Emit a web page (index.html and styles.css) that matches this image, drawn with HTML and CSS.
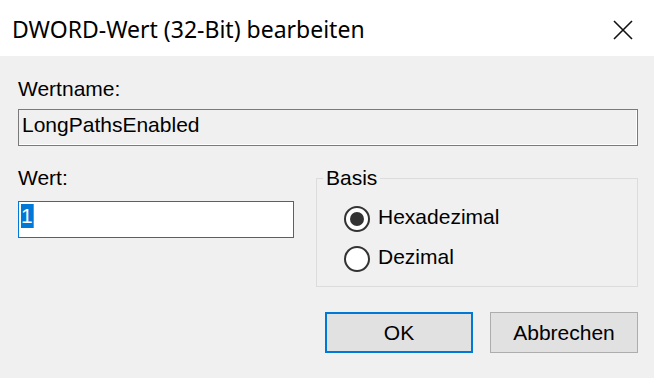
FILE: index.html
```html
<!DOCTYPE html>
<html lang="de">
<head>
    <meta charset="UTF-8">
    <title>DWORD-Wert (32-Bit) bearbeiten</title>
    <link rel="stylesheet" href="styles.css">
</head>
<body>
    <div class="dialog">
        <div class="titlebar">
            <span class="title">DWORD-Wert (32-Bit) bearbeiten</span>
            <svg class="close" width="20" height="20" viewBox="0 0 20 20">
                <path d="M1 1 L19 19 M19 1 L1 19" stroke="#111" stroke-width="1.6" fill="none"/>
            </svg>
        </div>

        <div class="content">
            <div class="label">Wertname:</div>
            <div class="name-box">LongPathsEnabled</div>

            <div class="value-row">
                <div class="value-col">
                    <div class="label">Wert:</div>
                    <div class="value-box"><span class="selected">1</span><span class="caret"></span></div>
                </div>

                <fieldset class="basis">
                    <legend>Basis</legend>
                    <label class="radio">
                        <span class="circle checked"></span>
                        <span class="radio-text">Hexadezimal</span>
                    </label>
                    <label class="radio">
                        <span class="circle"></span>
                        <span class="radio-text">Dezimal</span>
                    </label>
                </fieldset>
            </div>

            <div class="buttons">
                <button class="btn default">OK</button>
                <button class="btn">Abbrechen</button>
            </div>
        </div>
    </div>
</body>
</html>
```

FILE: styles.css
```css
* {
    box-sizing: border-box;
    margin: 0;
    padding: 0;
}

body {
    background: #f0f0f0;
    font-family: 'Liberation Sans', Arial, sans-serif;
    font-size: 21px;
    line-height: 24px;
    color: #000;
    width: 654px;
    height: 378px;
    overflow: hidden;
}

.titlebar {
    height: 56px;
    background: #fff;
    display: flex;
    align-items: center;
    justify-content: space-between;
    padding: 0 21px 0 12px;
}

.title {
    font-family: 'Noto Sans', 'Open Sans', sans-serif;
    font-size: 23px;
    line-height: 30px;
    color: #000;
    margin-top: 2px;
}

.close {
    display: block;
    margin-top: 4px;
}

.content {
    padding: 21px 16px 0 18px;
}

.name-box {
    margin-top: 8px;
    height: 37px;
    border: 1px solid #7a7a7a;
    box-shadow: inset -1px -1px 0 #fff;
    padding: 3px 4px 0 3px;
}

.value-row {
    display: grid;
    grid-template-columns: 276px 1fr;
    column-gap: 22px;
    margin-top: 20px;
}

.value-box {
    margin-top: 11px;
    height: 37px;
    border: 1px solid #0078d7;
    background: #fff;
    padding: 2px 2px 0 2px;
    display: flex;
    align-items: flex-start;
}

.selected {
    background: #0078d7;
    color: #fff;
    height: 24px;
}

.caret {
    width: 1px;
    height: 24px;
    background: #e07a2a;
}

.basis {
    border: 1px solid #dcdcdc;
    padding: 0 6px 7px 6px;
    min-width: 0;
}

.basis legend {
    padding: 0 3px;
    line-height: 24px;
}

.radio {
    display: flex;
    align-items: center;
    height: 40px;
    margin-left: 21px;
}

.radio:first-of-type {
    margin-top: 9px;
}

.circle {
    width: 26px;
    height: 26px;
    border: 2px solid #333;
    border-radius: 50%;
    background: #fff;
    display: flex;
    align-items: center;
    justify-content: center;
    flex-shrink: 0;
}

.circle.checked::after {
    content: "";
    width: 14px;
    height: 14px;
    border-radius: 50%;
    background: #333;
}

.radio-text {
    margin-left: 8px;
    margin-bottom: 4px;
}

.buttons {
    display: flex;
    justify-content: flex-end;
    gap: 17px;
    margin-top: 25px;
}

.btn {
    width: 148px;
    height: 41px;
    background: #e1e1e1;
    border: 1px solid #adadad;
    font-family: inherit;
    font-size: 21px;
    line-height: 24px;
    color: #000;
}

.btn.default {
    border: 2px solid #0078d7;
}
```
